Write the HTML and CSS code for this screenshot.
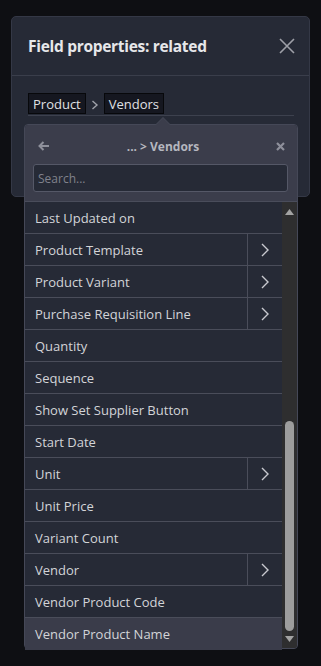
FILE: index.html
```html
<!DOCTYPE html>
<html lang="en">
<head>
    <meta charset="UTF-8">
    <meta name="viewport" content="width=device-width, initial-scale=1.0">
    <title>Field properties</title>
    <link rel="stylesheet" href="styles.css">
</head>
<body>
    <div class="modal">
        <div class="modal-header">
            <h4 class="modal-title">Field properties: related</h4>
            <button class="modal-close" aria-label="Close">
                <svg width="16" height="16" viewBox="0 0 16 16"><path d="M1 1 L15 15 M15 1 L1 15" stroke="#9ea0a8" stroke-width="1.6" fill="none"/></svg>
            </button>
        </div>
        <div class="modal-body">
            <div class="path">
                <span class="path-item">Product</span>
                <svg class="path-sep" width="8" height="10" viewBox="0 0 8 10"><path d="M1.5 1 L6 5 L1.5 9" stroke="#a0a2aa" stroke-width="1.4" fill="none"/></svg>
                <span class="path-item">Vendors</span>
            </div>
        </div>
    </div>

    <div class="popover">
        <div class="popover-arrow"></div>
        <div class="popover-header">
            <div class="popover-title">
                <svg class="back" width="12" height="10" viewBox="0 0 12 10"><path d="M11 5 H2 M5.5 1 L1.5 5 L5.5 9" stroke="#8e909b" stroke-width="2" fill="none"/></svg>
                <span>... &gt; Vendors</span>
                <svg class="close" width="9" height="9" viewBox="0 0 9 9"><path d="M1 1 L8 8 M8 1 L1 8" stroke="#8e909b" stroke-width="2.2" fill="none"/></svg>
            </div>
            <input class="search" type="text" placeholder="Search...">
        </div>
        <div class="popover-body">
            <ul class="fields">
                <li><span class="name">Last Updated on</span></li>
                <li><span class="name">Product Template</span><span class="follow"><svg width="8" height="14" viewBox="0 0 8 14"><path d="M1 1 L7 7 L1 13" stroke="#c8c9cf" stroke-width="1.4" fill="none"/></svg></span></li>
                <li><span class="name">Product Variant</span><span class="follow"><svg width="8" height="14" viewBox="0 0 8 14"><path d="M1 1 L7 7 L1 13" stroke="#c8c9cf" stroke-width="1.4" fill="none"/></svg></span></li>
                <li><span class="name">Purchase Requisition Line</span><span class="follow"><svg width="8" height="14" viewBox="0 0 8 14"><path d="M1 1 L7 7 L1 13" stroke="#c8c9cf" stroke-width="1.4" fill="none"/></svg></span></li>
                <li><span class="name">Quantity</span></li>
                <li><span class="name">Sequence</span></li>
                <li><span class="name">Show Set Supplier Button</span></li>
                <li><span class="name">Start Date</span></li>
                <li><span class="name">Unit</span><span class="follow"><svg width="8" height="14" viewBox="0 0 8 14"><path d="M1 1 L7 7 L1 13" stroke="#c8c9cf" stroke-width="1.4" fill="none"/></svg></span></li>
                <li><span class="name">Unit Price</span></li>
                <li><span class="name">Variant Count</span></li>
                <li><span class="name">Vendor</span><span class="follow"><svg width="8" height="14" viewBox="0 0 8 14"><path d="M1 1 L7 7 L1 13" stroke="#c8c9cf" stroke-width="1.4" fill="none"/></svg></span></li>
                <li><span class="name">Vendor Product Code</span></li>
                <li class="active"><span class="name">Vendor Product Name</span></li>
            </ul>
            <div class="scrollbar">
                <svg width="9" height="6" viewBox="0 0 9 6"><path d="M4.5 0 L9 6 H0 Z" fill="#a3a3a3"/></svg>
                <div class="thumb"></div>
                <svg width="9" height="6" viewBox="0 0 9 6"><path d="M0 0 H9 L4.5 6 Z" fill="#a3a3a3"/></svg>
            </div>
        </div>
    </div>
</body>
</html>
```

FILE: styles.css
```css
body {
    margin: 0;
    height: 666px;
    background-color: #0e0f13;
    font-family: "Open Sans", "Noto Sans", sans-serif;
    color: #d8d9dd;
    position: relative;
    overflow: hidden;
    padding: 16px 11px 0;
    box-sizing: border-box;
}
.modal {
    width: 299px;
    height: 181px;
    background: #262a36;
    border: 1px solid #343846;
    border-radius: 5px;
    box-sizing: border-box;
}
.modal-header {
    display: flex;
    align-items: center;
    justify-content: space-between;
    height: 59px;
    padding: 0 14px 0 16px;
    border-bottom: 1px solid #3a3e4b;
    box-sizing: border-box;
}
.modal-title {
    margin: 0;
    font-size: 15.5px;
    font-weight: 700;
    color: #e6e7ea;
    letter-spacing: -0.3px;
}
.modal-close {
    border: none;
    background: none;
    padding: 0;
    display: flex;
}
.modal-body {
    padding: 17px 15px 0 16px;
}
.path {
    display: flex;
    align-items: center;
    gap: 4px;
    padding-bottom: 1px;
    border-bottom: 1px solid #3d414e;
}
.path-item {
    background: #151720;
    border: 1px solid #07080b;
    padding: 0 4px;
    height: 21px;
    line-height: 20px;
    font-size: 13px;
    color: #e0e1e4;
    box-sizing: border-box;
}
.path-sep {
    margin: 2px 1px 0;
}
.popover {
    position: absolute;
    left: 24px;
    top: 124px;
    width: 274px;
    height: 525px;
    background: #262a36;
    border: 1px solid #454857;
    border-radius: 4px;
    box-sizing: border-box;
    display: flex;
    flex-direction: column;
}
.popover-arrow {
    position: absolute;
    left: 130px;
    top: -8px;
    width: 0;
    height: 0;
    border-left: 8px solid transparent;
    border-right: 8px solid transparent;
    border-bottom: 8px solid #454857;
}
.popover-arrow::after {
    content: "";
    position: absolute;
    left: -7px;
    top: 1px;
    border-left: 7px solid transparent;
    border-right: 7px solid transparent;
    border-bottom: 7px solid #3b3d4b;
}
.popover-header {
    background: #3b3d4b;
    padding: 11px 9px 9px 8px;
    border-bottom: 1px solid #4a4d5b;
    border-radius: 3px 3px 0 0;
}
.popover-title {
    display: flex;
    align-items: center;
    justify-content: space-between;
    padding: 0 3px 0 5px;
    height: 20px;
    font-size: 12px;
    font-weight: 700;
    color: #b5b7bf;
    margin-bottom: 8px;
}
.search {
    display: block;
    width: 100%;
    height: 28px;
    box-sizing: border-box;
    background: #262a36;
    border: 1px solid #555867;
    border-radius: 3px;
    padding: 0 4px;
    font-family: inherit;
    font-size: 12px;
    color: #d8d9dd;
}
.search::placeholder {
    color: #80828c;
}
.popover-body {
    flex: 1;
    display: flex;
    min-height: 0;
}
.fields {
    list-style: none;
    margin: 0;
    padding: 0;
    flex: 1;
}
.fields li {
    display: flex;
    height: 32px;
    border-bottom: 1px solid #4a4d5a;
    box-sizing: border-box;
    font-size: 13px;
    color: #d3d4d8;
}
.fields li:last-child {
    border-bottom: none;
}
.fields li.active {
    background: #3a3c4a;
}
.name {
    flex: 1;
    display: flex;
    align-items: center;
    padding-left: 10px;
}
.follow {
    width: 34px;
    display: flex;
    align-items: center;
    justify-content: center;
    border-left: 1px solid #4a4d5a;
}
.scrollbar {
    width: 15px;
    background: #2e2e2f;
    display: flex;
    flex-direction: column;
    align-items: center;
    padding: 7px 0 6px;
    box-sizing: border-box;
    border-radius: 0 0 3px 0;
}
.thumb {
    width: 9px;
    background: #9d9d9d;
    border-radius: 5px;
    margin: auto 0 5px;
    height: 210px;
}
```
